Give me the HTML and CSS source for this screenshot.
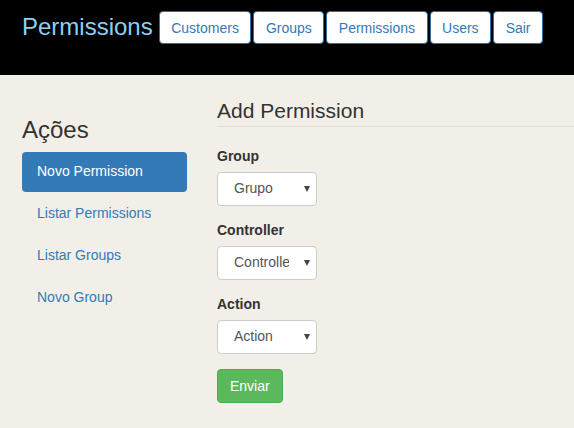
FILE: index.html
```html
<!DOCTYPE html>
<html lang="pt">
<head>
<meta charset="utf-8">
<title>Permissions</title>
<link rel="stylesheet" href="styles.css">
</head>
<body>
<header class="topbar">
  <h1 class="brand">Permissions</h1>
  <nav class="topnav">
    <a class="btn-top" href="#">Customers</a>
    <a class="btn-top" href="#">Groups</a>
    <a class="btn-top" href="#">Permissions</a>
    <a class="btn-top" href="#">Users</a>
    <a class="btn-top" href="#">Sair</a>
  </nav>
</header>
<div class="page">
  <aside class="sidebar">
    <h3 class="side-title">Ações</h3>
    <ul class="pills">
      <li><a class="pill active" href="#">Novo Permission</a></li>
      <li><a class="pill" href="#">Listar Permissions</a></li>
      <li><a class="pill" href="#">Listar Groups</a></li>
      <li><a class="pill" href="#">Novo Group</a></li>
    </ul>
  </aside>
  <main class="content">
    <form class="form">
      <div class="legend">Add Permission</div>
      <div class="form-group">
        <label class="label">Group</label>
        <div class="select"><span class="select-text">Grupo</span><span class="caret"></span></div>
      </div>
      <div class="form-group">
        <label class="label">Controller</label>
        <div class="select"><span class="select-text">Controller</span><span class="caret"></span></div>
      </div>
      <div class="form-group">
        <label class="label">Action</label>
        <div class="select"><span class="select-text">Action</span><span class="caret"></span></div>
      </div>
      <button class="btn-success" type="button">Enviar</button>
    </form>
  </main>
</div>
</body>
</html>
```
FILE: styles.css
```css
* { box-sizing: border-box; }
html, body {
  margin: 0;
  padding: 0;
  background: #f2efe8;
  font-family: "Liberation Sans", Arial, sans-serif;
  font-size: 14px;
  line-height: 1.42857;
  color: #333;
}
.topbar {
  background: #000;
  height: 75px;
  display: flex;
  align-items: flex-start;
  padding: 11px 0 0 22px;
  gap: 6px;
}
.brand {
  margin: 0;
  font-size: 24px;
  font-weight: normal;
  line-height: 31px;
  color: #8ecff4;
}
.topnav {
  display: flex;
  gap: 2px;
}
.btn-top {
  display: block;
  height: 33px;
  padding: 0 11.5px;
  line-height: 32px;
  background: #fff;
  border: 1px solid #2e6da4;
  border-radius: 4px;
  color: #337ab7;
  text-decoration: none;
  font-size: 14px;
}
.page {
  display: flex;
  gap: 30px;
  padding: 1px 0 0 22px;
}
.sidebar {
  width: 165px;
  flex: none;
}
.side-title {
  margin: 41px 0 9px;
  font-size: 24px;
  font-weight: 500;
  line-height: 26px;
  color: #333;
}
.pills {
  list-style: none;
  margin: 0;
  padding: 0;
  display: flex;
  flex-direction: column;
  gap: 2px;
}
.pill {
  display: block;
  padding: 10px 15px;
  border-radius: 4px;
  color: #337ab7;
  text-decoration: none;
}
.pill.active {
  background: #337ab7;
  color: #fff;
}
.content {
  flex: 1;
}
.legend {
  margin: 20px 0 20px;
  font-size: 21px;
  line-height: 30px;
  color: #333;
  border-bottom: 1px solid #e2e0db;
}
.form-group {
  margin-bottom: 15px;
}
.label {
  display: block;
  font-weight: bold;
  margin-bottom: 5px;
}
.select {
  width: 100px;
  height: 34px;
  background: #fff;
  border: 1px solid #ccc;
  border-radius: 4px;
  display: flex;
  align-items: center;
  padding: 0 6px 0 16px;
  color: #555;
}
.select-text {
  width: 55px;
  overflow: hidden;
  white-space: nowrap;
  font-size: 14px;
}
.caret {
  margin-left: auto;
  width: 0;
  height: 0;
  border-left: 3.5px solid transparent;
  border-right: 3.5px solid transparent;
  border-top: 6px solid #444;
}
.btn-success {
  height: 34px;
  padding: 0 12px;
  background: #5cb85c;
  border: 1px solid #4cae4c;
  border-radius: 4px;
  color: #fff;
  font-family: inherit;
  font-size: 14px;
}
```
